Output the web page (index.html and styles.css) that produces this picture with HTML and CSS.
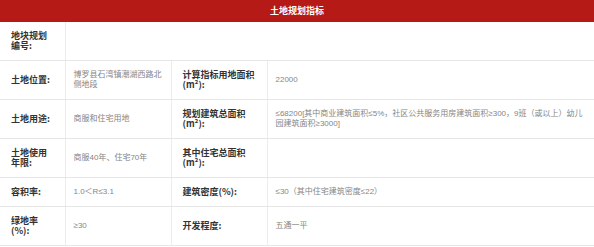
FILE: index.html
```html
<!DOCTYPE html>
<html lang="zh">
<head>
<meta charset="utf-8">
<link rel="stylesheet" href="styles.css">
</head>
<body>
<div class="panel">
  <div class="title">土地规划指标</div>
  <table class="grid">
    <colgroup>
      <col class="c1"><col class="c2"><col class="c3"><col class="c4">
    </colgroup>
    <tr>
      <th>地块规划编号:</th>
      <td colspan="3"></td>
    </tr>
    <tr>
      <th>土地位置:</th>
      <td>博罗县石湾镇潮湖西路北侧地段</td>
      <th>计算指标用地面积(m²):</th>
      <td>22000</td>
    </tr>
    <tr>
      <th>土地用途:</th>
      <td>商服和住宅用地</td>
      <th>规划建筑总面积(m²):</th>
      <td>≤68200[其中商业建筑面积≤5%，社区公共服务用房建筑面积≥300，9班（或以上）幼儿园建筑面积≥3000]</td>
    </tr>
    <tr>
      <th>土地使用年限:</th>
      <td>商服40年、住宅70年</td>
      <th>其中住宅总面积(m²):</th>
      <td></td>
    </tr>
    <tr>
      <th>容积率:</th>
      <td>1.0＜R≤3.1</td>
      <th>建筑密度(%):</th>
      <td>≤30（其中住宅建筑密度≤22）</td>
    </tr>
    <tr>
      <th>绿地率(%):</th>
      <td>≥30</td>
      <th>开发程度:</th>
      <td>五通一平</td>
    </tr>
  </table>
</div>
</body>
</html>
```

FILE: styles.css
```css
html, body {
  margin: 0;
  padding: 0;
  background: #ffffff;
}
body {
  font-family: "Noto Sans CJK SC", "Noto Sans", sans-serif;
}
.panel {
  width: 594px;
}
.title {
  height: 22px;
  background: #b61a17;
  color: #ffffff;
  font-weight: bold;
  font-size: 9px;
  line-height: 22px;
  text-align: center;
}
.grid {
  width: 594px;
  border-collapse: collapse;
  table-layout: fixed;
}
.c1 { width: 65px; }
.c2 { width: 106px; }
.c3 { width: 96px; }
.c4 { width: 327px; }
.grid th, .grid td {
  border-bottom: 1px solid #e6e6e6;
  border-right: 1px solid #ececec;
  vertical-align: middle;
  padding: 9px 4px 9px 8px;
  line-height: 10px;
  text-align: left;
}
.grid th {
  font-size: 9px;
  font-weight: bold;
  color: #333333;
  padding-left: 11px;
  padding-right: 11px;
}
.grid td {
  font-family: "Liberation Sans", "Noto Sans CJK SC", sans-serif;
  font-size: 8px;
  color: #858585;
}
```
